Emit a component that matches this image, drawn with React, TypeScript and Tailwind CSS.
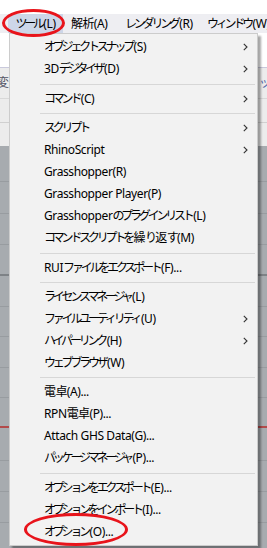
import React from "react";

type Item = { label: string; sub?: boolean } | { sep: number };

const items: Item[] = [
  { label: "オブジェクトスナップ(S)", sub: true },
  { label: "3Dデジタイザ(D)", sub: true },
  { sep: 8 },
  { label: "コマンド(C)", sub: true },
  { sep: 7 },
  { label: "スクリプト", sub: true },
  { label: "RhinoScript", sub: true },
  { label: "Grasshopper(R)" },
  { label: "Grasshopper Player(P)" },
  { label: "Grasshopperのプラグインリスト(L)" },
  { label: "コマンドスクリプトを繰り返す(M)" },
  { sep: 8 },
  { label: "RUIファイルをエクスポート(F)..." },
  { sep: 7 },
  { label: "ライセンスマネージャ(L)" },
  { label: "ファイルユーティリティ(U)", sub: true },
  { label: "ハイパーリンク(H)", sub: true },
  { label: "ウェブブラウザ(W)" },
  { sep: 7 },
  { label: "電卓(A)..." },
  { label: "RPN電卓(P)..." },
  { label: "Attach GHS Data(G)..." },
  { label: "パッケージマネージャ(P)..." },
  { sep: 8 },
  { label: "オプションをエクスポート(E)..." },
  { label: "オプションをインポート(I)..." },
  { label: "オプション(O)..." },
];

const KANA = /[\u3000-\u30ff]/;
const KANJI = /[\u4e00-\u9fff]/;

function Label({ text }: { text: string }) {
  const parts = text
    .split(/([\u3000-\u30ff]+|[\u4e00-\u9fff]+)/)
    .filter((p) => p.length > 0);
  return (
    <span className="whitespace-nowrap">
      {parts.map((p, i) =>
        KANA.test(p) ? (
          <span key={i} className="tracking-[-3.2px] pr-[1.5px]">
            {p}
          </span>
        ) : KANJI.test(p) ? (
          <span key={i} className="tracking-[-0.6px]">
            {p}
          </span>
        ) : (
          <span key={i} className="tracking-[-0.4px]">
            {p}
          </span>
        )
      )}
    </span>
  );
}

const Chevron = () => (
  <svg width="5" height="8" viewBox="0 0 5 8" className="mr-[9px]">
    <path d="M0.8 0.8 L4 4 L0.8 7.2" fill="none" stroke="#333" strokeWidth="1.1" />
  </svg>
);

export default function App() {
  const font = { fontFamily: '"Noto Sans", "Noto Sans CJK JP", sans-serif' };
  return (
    <div
      className="relative w-[267px] h-[548px] overflow-hidden bg-white text-[12px] text-black"
      style={font}
    >
      {/* top white strip */}
      <div className="h-[14px] bg-white" />
      {/* menu bar */}
      <div className="h-[19px] bg-[#eeeef2] flex items-center whitespace-nowrap">
        <div className="ml-[8px] h-full w-[55px] shrink-0 bg-[#cdd6e8] flex items-center justify-center">
          <Label text="ツール(L)" />
        </div>
        <div className="ml-[8px] w-[54px] shrink-0">
          <Label text="解析(A)" />
        </div>
        <div className="w-[82px] shrink-0">
          <Label text="レンダリング(R)" />
        </div>
        <div className="shrink-0">
          <Label text="ウィンドウ(W)" />
        </div>
      </div>
      {/* app background */}
      <div className="h-[35px] bg-white border-b border-[#c9c9dc]" />
      <div className="h-[78px] bg-[#ececec] flex flex-col">
        <div className="h-[30px] flex items-center justify-between text-[#556]">
          <span className="ml-[-3px]">変</span>
          <span className="mr-[-4px] text-[#5566aa]">リッ</span>
        </div>
        <div className="h-[24px] border-t border-[#d8d8d8]" />
        <div className="flex-1 border-t border-[#d0d0d0]" />
      </div>
      <div className="h-[402px] bg-[#a7abaf] flex flex-col">
        <div className="h-[36px] border-b border-[#989ca0]" />
        <div className="h-[32px] border-b border-[#989ca0]" />
        <div className="h-[31px] border-b border-[#989ca0]" />
        <div className="h-[31px] border-b-2 border-[#7e8286]" />
        <div className="h-[31px] border-b border-[#989ca0]" />
        <div className="h-[30px] border-b border-[#989ca0]" />
        <div className="h-[31px] border-b border-[#989ca0]" />
        <div className="h-[30px] border-b border-[#989ca0]" />
        <div className="h-[30px] border-b-2 border-[#b24a4a]" />
        <div className="h-[33px] border-b border-[#989ca0]" />
        <div className="h-[31px] border-b border-[#989ca0]" />
        <div className="h-[31px] border-b border-[#989ca0]" />
      </div>

      {/* dropdown */}
      <div className="absolute left-[9px] top-[33px] w-[249px] bg-[#f2f2f2] border border-[#cccccc] shadow-[3px_3px_2px_rgba(0,0,0,0.35)] pt-[2px] pb-[2px]">
        {items.map((it, i) =>
          "sep" in it ? (
            <div
              key={i}
              className={(it.sep === 8 ? "h-[8px]" : "h-[7px]") + " flex items-center"}
            >
              <div className="ml-[30px] mr-[2px] flex-1 h-px bg-[#d7d7d7]" />
            </div>
          ) : (
            <div key={i} className="h-[22px] flex items-center justify-between whitespace-nowrap">
              <span className="ml-[34px]">
                <Label text={it.label} />
              </span>
              {it.sub && <Chevron />}
            </div>
          )
        )}
      </div>

      {/* red annotation ellipses */}
      <div className="absolute left-[2px] top-[9px] w-[63px] h-[28px] rounded-[50%] border-[3px] border-[#e8141b]" />
      <div className="absolute left-[24px] top-[513px] w-[104px] h-[33px] rounded-[50%] border-[3px] border-[#e8141b]" />
    </div>
  );
}
